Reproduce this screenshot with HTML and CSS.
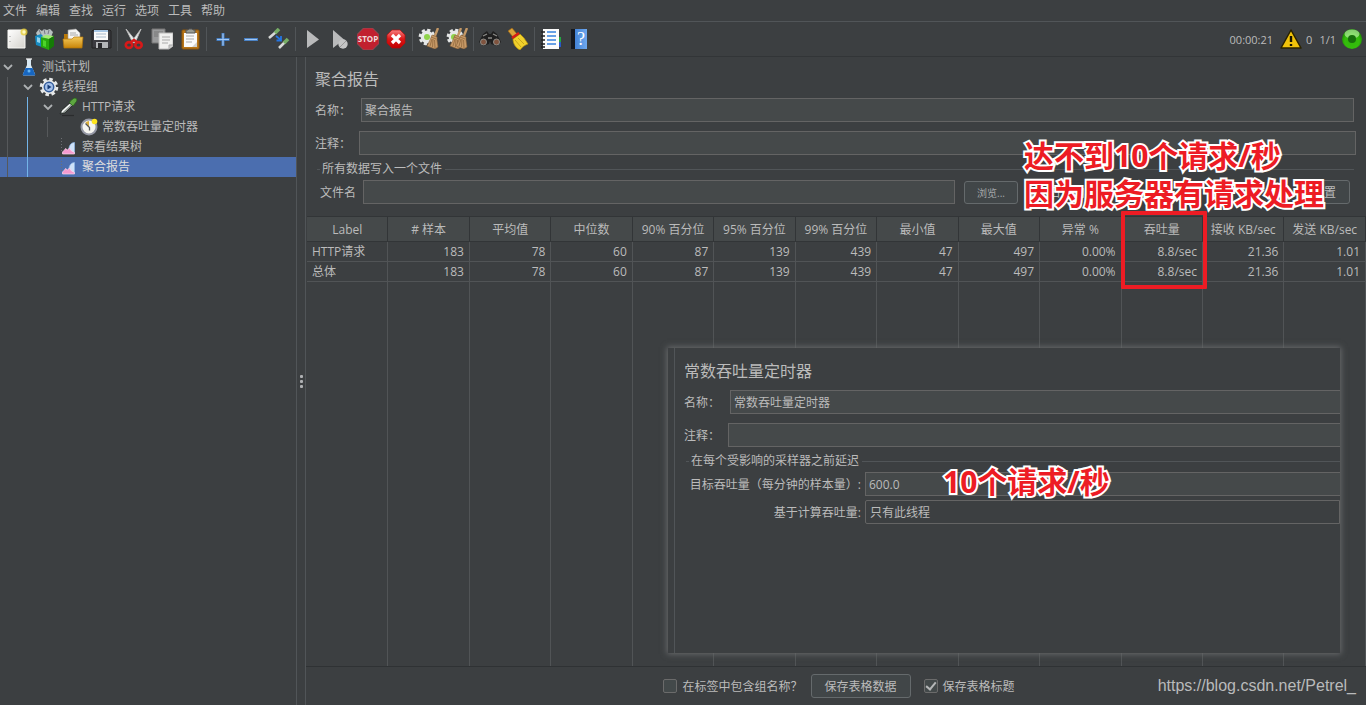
FILE: index.html
```html
<!DOCTYPE html>
<html lang="zh-CN">
<head>
<meta charset="utf-8">
<title>聚合报告</title>
<link rel="stylesheet" href="styles.css">
</head>
<body>
<svg class="defs" aria-hidden="true">
  <defs>
    <linearGradient id="gold" x1="0" y1="0" x2="0" y2="1"><stop offset="0" stop-color="#f4c95a"/><stop offset="1" stop-color="#c98508"/></linearGradient>
    <linearGradient id="paper" x1="0" y1="0" x2="1" y2="1"><stop offset="0" stop-color="#fff"/><stop offset="1" stop-color="#d4d2cc"/></linearGradient>
    <linearGradient id="redg" x1="0" y1="0" x2="0" y2="1"><stop offset="0" stop-color="#f77f7f"/><stop offset=".5" stop-color="#dc1717"/><stop offset="1" stop-color="#c00000"/></linearGradient>
    <linearGradient id="blueg" x1="0" y1="0" x2="1" y2="0"><stop offset="0" stop-color="#3577cf"/><stop offset="1" stop-color="#6fa8ee"/></linearGradient>
    <radialGradient id="greeng" cx=".5" cy=".6" r=".6"><stop offset="0" stop-color="#2fb80a"/><stop offset=".6" stop-color="#35bd0c"/><stop offset="1" stop-color="#168000"/></radialGradient>
    <symbol id="gear" viewBox="0 0 20 20">
      <circle cx="10" cy="10" r="7.8" fill="none" stroke="#e6e8e8" stroke-width="3" stroke-dasharray="3.5 2.62"/>
      <circle cx="10" cy="10" r="5.4" fill="#e6e8e8" stroke="#e6e8e8" stroke-width="3.4"/>
    </symbol>
    <symbol id="broom" viewBox="0 0 13 21">
      <path d="M12 0 8.500 9" stroke="#c39866" stroke-width="2.400"/>
      <path d="m6 7 5 2v3l1 7-3 2-8-3 3-6z" fill="#c79a68" stroke="#8a6137" stroke-width=".6"/>
      <path d="m6 11-2 7m3-7-.5 8m2-7 .5 8M5 9l5 2" stroke="#8a6137" stroke-width=".7"/>
    </symbol>
    <symbol id="chart" viewBox="0 0 20 20">
      <path d="M2.500 1v14" stroke="#6d6f73" stroke-dasharray="1 2"/>
      <path d="M9.500 16c0-7 2-10.500 6-10.500V16z" fill="#cfe2f8" stroke="#8fb7e8" stroke-width=".7"/>
      <path d="m3.500 15 2-2 1-1.500 2 1.500 2-2 2 3 3 1.500V17h-12z" fill="#f59ad0" stroke="#fbd9ee" stroke-width=".7"/>
    </symbol>
    <symbol id="dropper" viewBox="0 0 20 20">
      <path d="M3 18.500h12" stroke="#2a2c2d" stroke-width="1.200"/>
      <path d="m1 17 2-4.500 8.500-7 2.500 2.500-8 8z" fill="#8f9793" stroke="#202322" stroke-width=".8"/>
      <path d="m3 15 8-7.500" stroke="#fff" stroke-width="1.300"/>
      <path d="m10.500 5.500 3.500 3.500 1.200-1.500 2.600-3.500c.6-2.300-1.200-3.600-3-2.700l-3 2.200z" fill="#5ea740" stroke="#245d17" stroke-width=".7"/>
    </symbol>
    <symbol id="chev" viewBox="0 0 10 10"><path d="M1 3l4 4 4-4" fill="none" stroke="#adb0b2" stroke-width="1.800"/></symbol>
  </defs>
</svg>

<div class="app">
  <nav class="menubar">
    <button>文件</button><button>编辑</button><button>查找</button><button>运行</button><button>选项</button><button>工具</button><button>帮助</button>
  </nav>

  <header class="toolbar">
    <button class="tool" aria-label="新建"><svg viewBox="0 0 22 22"><path d="M2 2h17v18H2z" fill="url(#paper)" stroke="#f8f8f5"/><path d="M4 8v1m0 4v1" stroke="#999"/><circle cx="18" cy="4" r="3.500" fill="#e8cf38" opacity=".8"/><circle cx="18" cy="4" r="1.700" fill="#fff9bf"/></svg></button>
    <button class="tool" aria-label="模板"><svg viewBox="0 0 22 22"><path d="m2 5 3-4 3 2 2-2 3 1 3-1 3 3-2 5H4z" fill="#b8c0c0"/><path d="m5 2 2 4m3-5 1 5m4-4-1 4" stroke="#667" stroke-width=".8"/><path d="m1 8 6-2 4 4v10l-9-3z" fill="#168bc2"/><path d="m3 9 3 1v5l-3-1z" fill="#8ed2ee"/><path d="m7 9 8 2v11l-8-3z" fill="#27a80d"/><path d="m7 9 5-2 8 1-5 3z" fill="#a1ed70"/><path d="m15 11 5-3v10l-5 4z" fill="#157b06"/><path d="m9 12 3 1v6l-3-1z" fill="#4dd42b"/></svg></button>
    <button class="tool" aria-label="打开"><svg viewBox="0 0 22 22"><path d="M2 20V6h6l2 3h10v11z" fill="#b97909"/><path d="m6 2 8-1 4 4v9H6z" fill="#f5f5f4" stroke="#999" stroke-width=".6"/><path d="M8 5h6m-6 2h8" stroke="#aaa"/><path d="M1 11h9l2-2h9l-1 11H2z" fill="url(#gold)" stroke="#b47708" stroke-width=".7"/></svg></button>
    <button class="tool" aria-label="保存"><svg viewBox="0 0 22 22"><path d="M3 2h17l1 1v17H2V3z" fill="#3b3b40" stroke="#222"/><path d="M4 2h14v10H4z" fill="#fafafa"/><path d="M4 2h14v2H4z" fill="#a8c7e5"/><path d="M6 6h10M6 9h10" stroke="#abc"/><path d="M6 14h12v6H6z" fill="#b4b6b9"/><path d="M8 15h4v5H8z" fill="#29292d"/></svg></button>
    <i class="sep"></i>
    <button class="tool" aria-label="剪切"><svg viewBox="0 0 22 22"><path d="m3 1 10 12-3 2zM18 1 9 13l3 2z" fill="#eceeed" stroke="#bbb" stroke-width=".9"/><path d="m8 14 3-2 3 2" fill="none" stroke="#d61919" stroke-width="2.500"/><ellipse cx="6" cy="17" rx="3.200" ry="2.900" fill="none" stroke="#d61919" stroke-width="2.600"/><ellipse cx="15.500" cy="17" rx="3.200" ry="2.900" fill="none" stroke="#d61919" stroke-width="2.600"/></svg></button>
    <button class="tool" aria-label="复制"><svg viewBox="0 0 22 22"><path d="M1 1h13v14H1z" fill="#9a9b9c" stroke="#777"/><path d="M3 4h9M3 6h9M3 8h9" stroke="#777"/><path d="M8 5h14v13l-4 3H8z" fill="#f0f0ef" stroke="#bbb"/><path d="M11 9h8m-8 3h8m-8 3h6" stroke="#aaa"/><path d="M18 21v-4h4" fill="#ccc" stroke="#aaa"/></svg></button>
    <button class="tool" aria-label="粘贴"><svg viewBox="0 0 22 22"><rect x="3" y="2" width="17" height="19" rx="1" fill="#b97618" stroke="#8c560d"/><path d="M5 5h13v14H5z" fill="#fafafa"/><path d="M7 4V2h2l1-1h3l1 1h2v3H7z" fill="#9a9d94" stroke="#555"/><path d="M7 8h8m-8 3h8m-8 3h6" stroke="#aaa"/><path d="m13 19 5-5v5z" fill="#d2d2cf"/></svg></button>
    <i class="sep"></i>
    <button class="tool" aria-label="展开"><svg viewBox="0 0 22 22"><path d="M11 5v13M4.500 11.500h13" stroke="#437cc0" stroke-width="3"/><path d="M11 5.500v12M5 11.500h12" stroke="#a2c7f4" stroke-width="1.200"/></svg></button>
    <button class="tool" aria-label="折叠"><svg viewBox="0 0 22 22"><path d="M4 11.500h14" stroke="#437cc0" stroke-width="3"/><path d="M5 11.500h12" stroke="#a2c7f4" stroke-width="1.200"/></svg></button>
    <button class="tool" aria-label="切换"><svg viewBox="0 0 22 22"><path d="m1 10 7-6M11 20l6-6" stroke="#d7d9d7" stroke-width="2.600"/><path d="m7 5 4-4m5 14 4-4" stroke="#77ad66" stroke-width="3.600"/><path d="m8 8 5 4m0-4v4.500H8.500" fill="none" stroke="#2475e2" stroke-width="1.800"/></svg></button>
    <i class="sep"></i>
    <button class="tool" aria-label="启动"><svg viewBox="0 0 22 22"><path d="m6 2 12 9.500L6 20z" fill="#b9babb"/></svg></button>
    <button class="tool" aria-label="不停顿开始"><svg viewBox="0 0 22 22"><path d="m4 2 11 9.500L4 20z" fill="#b9babb"/><circle cx="14" cy="16" r="4.700" fill="#c5c6c6"/><path d="m11 19 6-6" stroke="#999"/></svg></button>
    <button class="tool" aria-label="停止"><svg viewBox="0 0 22 22"><path d="M6.500 0h9L22 6.500v9L15.500 22h-9L0 15.500v-9z" fill="#c1202f" stroke="#8e5961" stroke-width=".8"/><text x="11" y="14" class="stop-text">STOP</text></svg></button>
    <button class="tool" aria-label="关闭"><svg viewBox="0 0 22 22"><path d="M7 2h8l5 5v8l-5 5H7l-5-5V7z" fill="url(#redg)" stroke="#b60d0d" stroke-width=".7"/><path d="m7 7 8 8m0-8-8 8" stroke="#fff" stroke-width="3.200"/></svg></button>
    <i class="sep"></i>
    <button class="tool" aria-label="清除"><svg viewBox="0 0 22 22"><use href="#gear" x="0" y="0" width="18" height="18"/><circle cx="9" cy="9" r="3" fill="#8fd34b"/><use href="#broom" x="8" y="0" width="13" height="21"/></svg></button>
    <button class="tool" aria-label="清除全部"><svg viewBox="0 0 22 22"><use href="#gear" x="0" y="0" width="18" height="18"/><circle cx="8" cy="9" r="3" fill="#8fd34b"/><use href="#broom" x="3" y="0" width="13" height="21"/><use href="#broom" x="9" y="0" width="13" height="21"/></svg></button>
    <i class="sep"></i>
    <button class="tool" aria-label="查找"><svg viewBox="0 0 22 22"><path d="m4 6 4-3 2 3h2l2-3 4 3 4 8-4 4-6-2-1-3-1 3-6 2-4-4z" fill="#1f1f1f"/><path d="m4 8 4-2m6 0 4 2M9 10h4" stroke="#8b8b88" stroke-width="1.300"/><circle cx="4.500" cy="14" r="3" fill="#80543f" stroke="#8d8d89" stroke-width="1"/><circle cx="17.500" cy="14" r="3" fill="#80543f" stroke="#8d8d89" stroke-width="1"/></svg></button>
    <button class="tool" aria-label="重置搜索"><svg viewBox="0 0 22 22"><path d="m1 3 4-3 5 6-4 3z" fill="#dba23a" stroke="#9d6510" stroke-width=".6"/><path d="m6 11 7-5 4 4 4 6c-3 1-6 3-8 6-4-2-7-6-7-11z" fill="#f1d12c" stroke="#b6920a" stroke-width=".7"/><path d="m5 10 7-5" stroke="#d71d13" stroke-width="2.500"/><path d="m8 12 6 7m-3-9 6 6" stroke="#bd9915" stroke-width=".8"/></svg></button>
    <i class="sep"></i>
    <button class="tool" aria-label="函数助手"><svg viewBox="0 0 22 22"><path d="M3 1h16v20H3z" fill="#fbfbfb"/><path d="M1 4h4M1 8h4M1 12h4M1 16h4M1 19h4" stroke="#202020" stroke-width="1.600"/><path d="M7 4h9M7 8h9M7 12h9M7 16h9" stroke="#3783df" stroke-width="1.600"/><path d="M19 9h2v5h-2z" fill="#22a843"/><path d="M19 14h2v5h-2z" fill="#2859c8"/></svg></button>
    <button class="tool" aria-label="帮助"><svg viewBox="0 0 22 22"><path d="M3 1h16v20H3z" fill="url(#blueg)"/><path d="M3 1h4v20H3z" fill="#151920"/><text x="13" y="17" class="help-text">?</text></svg></button>
    <div class="status">
      <span class="time">00:00:21</span>
      <svg class="warn" viewBox="0 0 22 22"><path d="m11 2 10 18H1z" fill="#f0c20a" stroke="#292200" stroke-width="1.500" stroke-linejoin="round"/><path d="M11 8v6m0 2v2" stroke="#171300" stroke-width="2.400"/></svg>
      <span class="errors">0</span>
      <span class="threads">1/1</span>
      <svg class="lamp" viewBox="0 0 22 22"><circle cx="11" cy="11" r="10" fill="url(#greeng)"/><ellipse cx="11" cy="6" rx="7.500" ry="4.500" fill="#c9f7b6" opacity=".6"/><circle cx="11" cy="11" r="4" fill="#176f0b"/></svg>
    </div>
  </header>

  <div class="main">
    <ul class="tree">
      <li><svg class="chev"><use href="#chev"/></svg><svg class="ico" viewBox="0 0 20 20"><path d="M8 2h4v6l4 9c.5 1-.5 1.500-1 1.500H5c-1 0-1.500-.7-1-1.500L8 8z" fill="#d8e8f2"/><path d="m6.500 11-2.500 6c-.5 1 0 1.500 1 1.500h10c1 0 1.500-.5 1-1.500L13.500 11z" fill="#1766c0"/><path d="M7 2h6" stroke="#eee" stroke-width="1.300"/><circle cx="10" cy="14" r="1.500" fill="#64b4f2"/></svg><span>测试计划</span></li>
      <li><i class="guide"></i><svg class="chev"><use href="#chev"/></svg><svg class="ico" viewBox="0 0 20 20"><use href="#gear"/><circle cx="10" cy="10" r="4.700" fill="#a5c1ea" stroke="#315b9b" stroke-width="1.500"/><path d="m8.500 7.500 4 2.500-4 2.500z" fill="#173c77"/></svg><span>线程组</span></li>
      <li><i class="guide"></i><i class="guide lit"></i><svg class="chev"><use href="#chev"/></svg><svg class="ico"><use href="#dropper"/></svg><span>HTTP请求</span></li>
      <li><i class="guide"></i><i class="guide lit"></i><i class="guide"></i><i class="chev"></i><svg class="ico" viewBox="0 0 20 20"><circle cx="10" cy="10" r="7.500" fill="#f6f5f0" stroke="#9598a5" stroke-width="2"/><path d="M10 10 6.500 5.500A6 6 0 0 1 10 4z" fill="#ddb13b"/><path d="m6.500 6.500 4 4v3" fill="none" stroke="#555" stroke-width="1.300"/><circle cx="15.500" cy="4.500" r="2.800" fill="#ffe51e"/></svg><span>常数吞吐量定时器</span></li>
      <li><i class="guide"></i><i class="guide lit"></i><i class="chev"></i><svg class="ico"><use href="#chart"/></svg><span>察看结果树</span></li>
      <li class="selected"><i class="guide"></i><i class="guide lit"></i><i class="chev"></i><svg class="ico"><use href="#chart"/></svg><span>聚合报告</span></li>
    </ul>
    <div class="splitter"><i></i><i></i><i></i></div>

    <main class="report">
      <div class="form">
        <h1>聚合报告</h1>
        <div class="field"><label for="name">名称：</label><input id="name" value="聚合报告"></div>
        <div class="field comment"><label for="comment">注释：</label><input id="comment"></div>
        <fieldset>
          <legend>所有数据写入一个文件</legend>
          <div class="file">
            <label for="file">文件名</label><input id="file" class="path">
            <button class="btn browse">浏览...</button>
            <span class="log">显示日志内容：</span>
            <button class="btn config">配置</button>
          </div>
        </fieldset>
      </div>
      <div class="results">
        <table>
          <thead><tr><th>Label</th><th># 样本</th><th>平均值</th><th>中位数</th><th>90% 百分位</th><th>95% 百分位</th><th>99% 百分位</th><th>最小值</th><th>最大值</th><th>异常 %</th><th>吞吐量</th><th>接收 KB/sec</th><th>发送 KB/sec</th></tr></thead>
          <tbody>
            <tr><td>HTTP请求</td><td>183</td><td>78</td><td>60</td><td>87</td><td>139</td><td>439</td><td>47</td><td>497</td><td>0.00%</td><td>8.8/sec</td><td>21.36</td><td>1.01</td></tr>
            <tr><td>总体</td><td>183</td><td>78</td><td>60</td><td>87</td><td>139</td><td>439</td><td>47</td><td>497</td><td>0.00%</td><td>8.8/sec</td><td>21.36</td><td>1.01</td></tr>
            <tr class="rest"><td></td><td></td><td></td><td></td><td></td><td></td><td></td><td></td><td></td><td></td><td></td><td></td><td></td></tr>
          </tbody>
        </table>
      </div>
      <footer class="actions">
        <label class="check"><input type="checkbox">在标签中包含组名称？</label>
        <button class="btn save">保存表格数据</button>
        <label class="check"><input type="checkbox" checked>保存表格标题</label>
      </footer>
    </main>
  </div>

  <section class="inset">
    <div class="inset-body">
      <h1>常数吞吐量定时器</h1>
      <div class="field"><label for="tname">名称：</label><input id="tname" value="常数吞吐量定时器"></div>
      <div class="field comment"><label for="tcomment">注释：</label><input id="tcomment"></div>
      <fieldset>
        <legend>在每个受影响的采样器之前延迟</legend>
        <div class="prop"><label for="target">目标吞吐量（每分钟的样本量）:</label><input id="target" value="600.0"></div>
        <div class="prop"><label for="based">基于计算吞吐量:</label><select id="based"><option>只有此线程</option></select></div>
      </fieldset>
    </div>
  </section>

  <div class="mark-box"></div>
  <p class="note note-top">达不到10个请求/秒<br>因为服务器有请求处理</p>
  <p class="note note-inset">10个请求/秒</p>
  <span class="watermark">https://blog.csdn.net/Petrel_</span>
</div>
</body>
</html>
```

FILE: styles.css
```css
* { box-sizing: border-box; }
body { margin: 0; background: #3c3f41; color: #bbb; }
body, button, input, select {
  font-family: "Open Sans", "Noto Sans CJK SC", sans-serif;
  font-size: 12px;
}
button, input, select { color: inherit; margin: 0; border-radius: 0; }
h1, p, ul, fieldset { margin: 0; padding: 0; border: 0; }
.defs { position: absolute; width: 0; height: 0; }
.app { position: relative; display: flex; flex-direction: column; height: 100vh; min-height: 600px; overflow: hidden; }

.menubar { display: flex; height: 22px; padding-left: 3px; gap: 9px; border-bottom: 1px solid #515558; }
.menubar button { padding: 0; border: 0; background: none; line-height: 22px; }

.toolbar { display: flex; align-items: center; height: 35px; padding: 0 3px; border-bottom: 1px solid #323537; }
.tool { width: 28px; height: 28px; padding: 3px; border: 0; background: none; }
.tool svg { display: block; width: 22px; height: 22px; }
.sep { width: 1px; height: 24px; margin: 0 2px; background: #515558; }
.stop-text { font: bold 8px "Open Sans", sans-serif; fill: #f0dcdc; text-anchor: middle; }
.help-text { font: 18px "Liberation Serif", serif; fill: #fff; text-anchor: middle; }
.status { display: flex; align-items: center; margin-left: auto; font-size: 11px; }
.warn { width: 22px; height: 22px; margin: 0 4px 0 7px; }
.threads { margin: 0 5px 0 7px; }
.lamp { width: 22px; height: 22px; }

.main { display: flex; flex: 1; min-height: 0; }
.tree { width: 297px; list-style: none; border-right: 1px solid #515558; }
.tree li { display: flex; align-items: center; height: 20px; }
.tree span { padding-left: 3px; line-height: 20px; }
.guide { width: 20px; height: 20px; padding-left: 7px; }
.guide::before { content: ""; display: block; width: 1px; height: 20px; background: #56595b; }
.guide.lit::before { background: #73b4e8; }
.chev { width: 19px; height: 10px; padding: 0 6px 0 3px; }
.ico { width: 20px; height: 20px; }
.tree span { margin-left: 0; }
.selected { background: #4b6eaf; color: #ddd; }
.splitter { display: flex; flex-direction: column; align-items: center; justify-content: center; gap: 2px; width: 9px; border-right: 1px solid #515558; }
.splitter i { width: 3px; height: 3px; border-radius: 1px; background: #afb1b3; }

.report { display: flex; flex: 1; flex-direction: column; min-width: 0; }
.form { padding: 10px 10px 0 9px; }
h1 { font-size: 16px; font-weight: 400; line-height: 24px; }
.field { display: flex; align-items: center; margin-top: 7px; padding-right: 2px; }
.field label { width: 46px; }
input:not([type=checkbox]) { flex: 1; min-width: 0; height: 24px; padding: 0 3px; border: 1px solid #646464; background: #45494a; outline: 0; }
.field.comment { margin-top: 9px; padding-right: 0; }
.field.comment label { width: 44px; }
legend { display: flex; align-items: center; width: 100%; padding: 0; line-height: 18px; }
legend::before { content: ""; width: 3px; height: 1px; margin-right: 2px; background: #515558; }
legend::after { content: ""; flex: 1; height: 1px; margin-left: 3px; background: #515558; }
.form fieldset { margin: 5px 2px 0; }
.file { display: flex; align-items: center; height: 28px; padding-right: 4px; }
.file > label:first-child { width: 46px; padding-left: 3px; }
.btn { height: 24px; padding: 0 13px; border: 1px solid #656a6c; border-radius: 3px; background: #414648; }
.file .browse { width: 54px; height: 23px; margin: 0 7px 0 9px; padding: 0; font-size: 10px; color: #a4a6a8; }
.check { display: flex; align-items: center; }
.check input { display: grid; place-items: center; appearance: none; width: 14px; height: 14px; margin: 0 5px 0 0; border: 1px solid #6b6b6b; border-radius: 2px; background: #43494a; }
.check input:checked::before { content: ""; width: 4px; height: 8px; margin-bottom: 2px; border: solid #b5b7b8; border-width: 0 2px 2px 0; transform: rotate(40deg); }
.file .log { width: 273px; }

.results { flex: 1; min-height: 0; margin-top: 10px; padding-left: 1px; }
table { width: 100%; height: 100%; table-layout: fixed; border-collapse: separate; border-spacing: 0; }
th { height: 26px; padding: 0; border: solid #323537; border-width: 1px 1px 1px 0; background: #45494a; font-weight: 400; white-space: nowrap; }
td { height: 20px; padding: 0 5px; border: solid #515456; border-width: 0 1px 1px 0; line-height: 19px; text-align: right; }
td:first-child { text-align: left; }
.rest td { height: auto; border-bottom: 0; }
.actions { display: flex; align-items: center; justify-content: center; height: 39px; padding-left: 6px; border-top: 1px solid #2f3234; }
.btn.save { width: 100px; margin: 0 13px 0 8px; padding: 0; }

.inset { position: absolute; left: 668px; top: 348px; right: 26px; height: 305px; padding-left: 6px; background: #3c3f41; box-shadow: 0 0 6px 1px #6a6c6d; }
.inset-body { height: 100%; padding: 11px 0 0 9px; border-left: 1px solid #515558; }
.inset .field { padding: 0; }
.inset .field input, .inset .prop input, .inset select { border-right: 0; }
.inset fieldset { margin-top: 5px; padding-left: 2px; }
.prop { display: flex; align-items: center; margin-top: 2px; }
.prop + .prop { margin-top: 4px; }
.prop label { flex: 0 0 179px; padding-right: 4px; text-align: right; white-space: nowrap; }
.prop select { flex: 1; height: 24px; padding: 0 4px; appearance: none; border: 1px solid #646464; border-radius: 2px 0 0 2px; background: #3c3f41; }

.mark-box { position: absolute; left: 1121px; top: 211px; width: 86px; height: 78px; border: 4px solid #ed1c24; border-radius: 1px; }
.note { position: absolute; color: #ed1c24; font: bold 30px/38px "Open Sans", "Noto Sans CJK SC", sans-serif; white-space: nowrap; -webkit-text-stroke: 4px #fff; paint-order: stroke fill; }
.note-top { left: 1024px; top: 137px; }
.note-inset { left: 943px; top: 463px; }
.watermark { position: absolute; right: 10px; bottom: 8px; color: #b9babb; font: 16px/22px "Liberation Sans", sans-serif; }
```
